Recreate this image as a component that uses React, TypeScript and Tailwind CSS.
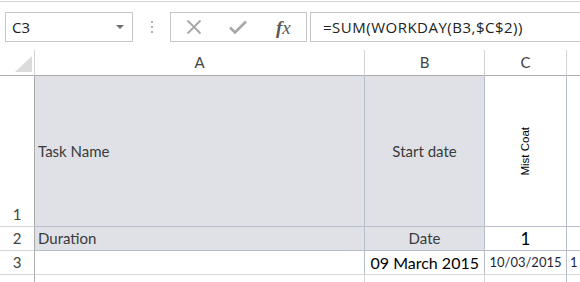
const hdrCell = "flex items-center justify-center border-r border-b border-r-[#d4d4d4] border-b-[#ababab] text-[15px] text-[#444]";
const rowHdr = "flex items-end justify-center border-r border-b border-r-[#ababab] border-b-[#d4d4d4] text-[15px] text-[#444] pb-[1px]";
const blue = "border-r border-b border-[#b6bece]";

export default function App() {
  return (
    <div className="relative h-[282px] w-[580px] overflow-hidden bg-white font-['Lato',sans-serif]">
      <div className="mt-px h-px bg-[#d4d4d4]" />

      {/* formula bar */}
      <div className="mt-[10px] flex h-[30px] items-stretch">
        <div className="ml-[5px] flex w-[128px] items-center justify-between border border-[#c6c6c6] pl-[6px] pr-[8px]">
          <span className="font-['Open_Sans',sans-serif] text-[15px] text-[#222]">C3</span>
          <svg width="8" height="4" viewBox="0 0 8 4">
            <path d="M0 0h8L4 4z" fill="#6e6e6e" />
          </svg>
        </div>
        <div className="flex w-[37px] flex-col items-center justify-center gap-[3px]">
          <span className="h-[2px] w-[2px] bg-[#b0b0b0]" />
          <span className="h-[2px] w-[2px] bg-[#b0b0b0]" />
          <span className="h-[2px] w-[2px] bg-[#b0b0b0]" />
        </div>
        <div className="flex w-[137px] items-center border border-[#c6c6c6]">
          <svg className="ml-[15px]" width="16" height="16" viewBox="0 0 16 16">
            <path d="M1.5 1.5l13 13M14.5 1.5l-13 13" stroke="#a8a8a8" strokeWidth="1.8" />
          </svg>
          <svg className="ml-[27px]" width="18" height="14" viewBox="0 0 18 14">
            <path d="M1 7.5l5 5L17 1.5" stroke="#a8a8a8" strokeWidth="2.6" fill="none" />
          </svg>
          <span className="ml-[29px] font-['Liberation_Serif',serif] text-[19px] italic leading-none text-[#5a5a5a]">
            <span className="font-bold">f</span>x
          </span>
        </div>
        <div className="ml-[3px] flex flex-1 items-center border-y border-l border-[#c6c6c6] pl-[12px] font-['Open_Sans',sans-serif] text-[15px] tracking-[0.5px] text-[#222]">
          =SUM(WORKDAY(B3,$C$2))
        </div>
      </div>

      {/* sheet grid */}
      <div className="mt-[8px] grid grid-cols-[35px_330px_120px_82px_1fr] grid-rows-[26px_151px_24px_24px_24px]">
        <div className="flex items-end justify-start border-r border-b border-r-[#d4d4d4] border-b-[#ababab] pb-[3px] pl-[15px]">
          <svg width="17" height="16" viewBox="0 0 17 16">
            <path d="M17 0V16H0z" fill="#dcdcdc" />
          </svg>
        </div>
        <div className={hdrCell}>A</div>
        <div className={hdrCell}>B</div>
        <div className={hdrCell}>C</div>
        <div className="border-b border-b-[#ababab]" />

        <div className={rowHdr}>1</div>
        <div className={`${blue} flex items-center bg-[#dfe1e6] pl-[3px] text-[15px] text-[#3a3a3a]`}>Task Name</div>
        <div className={`${blue} flex items-center justify-center bg-[#dfe1e6] text-[15px] text-[#3a3a3a]`}>Start date</div>
        <div className={`${blue} flex items-center justify-center`}>
          <span className="rotate-180 font-['Liberation_Sans',sans-serif] text-[11.5px] text-black [writing-mode:vertical-rl]">
            Mist Coat
          </span>
        </div>
        <div className="border-b border-[#b6bece]" />

        <div className={rowHdr}>2</div>
        <div className={`${blue} flex items-center bg-[#dfe1e6] pl-[3px] text-[15px] text-[#3a3a3a]`}>Duration</div>
        <div className={`${blue} flex items-center justify-center bg-[#dfe1e6] text-[15px] text-[#3a3a3a]`}>Date</div>
        <div className={`${blue} flex items-center justify-center text-[17px] text-black`}>1</div>
        <div className="border-b border-[#b6bece]" />

        <div className={rowHdr}>3</div>
        <div className="border-r border-b border-r-[#b6bece] border-b-[#d8d8d8]" />
        <div className="flex items-center justify-end border-r border-b border-r-[#b6bece] border-b-[#d8d8d8] pr-[5px] text-[16px] text-black">
          09 March 2015
        </div>
        <div className="flex items-center justify-center border-r border-b border-r-[#b6bece] border-b-[#d8d8d8] text-[13px] text-[#1f1f3a]">
          10/03/2015
        </div>
        <div className="flex items-center border-b border-[#d8d8d8] pl-[3px] text-[13px] text-[#1f1f3a]">1</div>

        <div className="border-r border-r-[#ababab]" />
        <div className="border-r border-[#d8d8d8]" />
        <div className="border-r border-[#d8d8d8]" />
        <div className="border-r border-[#b6bece]" />
        <div />
      </div>
    </div>
  );
}
